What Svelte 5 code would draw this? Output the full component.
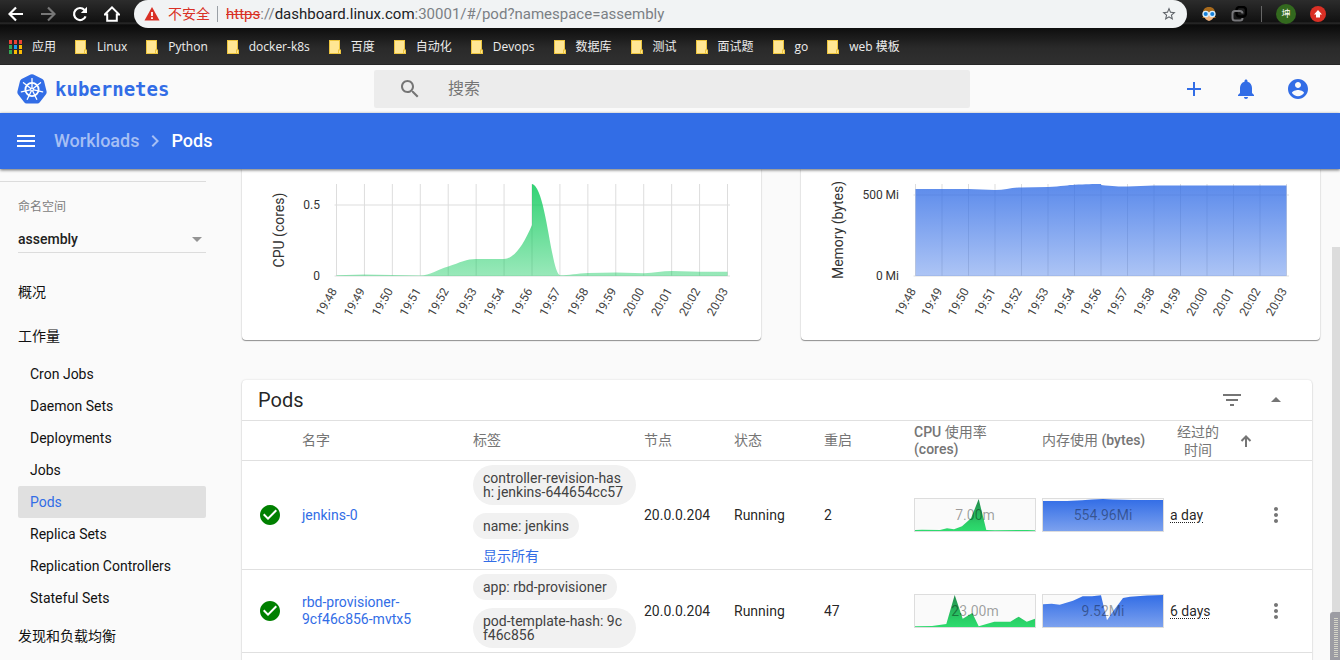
<script>
  const bookmarks = ['Linux', 'Python', 'docker-k8s', '百度', '自动化', 'Devops', '数据库', '测试', '面试题', 'go', 'web 模板'];

  const appColors = ['#ea4335', '#ea4335', '#ea4335', '#34a853', '#1a9bf0', '#fbbc05', '#34a853', '#fbbc05', '#fbbc05'];

  const workloads = [
    'Cron Jobs',
    'Daemon Sets',
    'Deployments',
    'Jobs',
    'Pods',
    'Replica Sets',
    'Replication Controllers',
    'Stateful Sets'
  ];

  const times = ['19:48', '19:49', '19:50', '19:51', '19:52', '19:53', '19:54', '19:56', '19:57', '19:58', '19:59', '20:00', '20:01', '20:02', '20:03'];

  const charts = [
    {
      id: 'cpu',
      label: 'CPU (cores)',
      color: '#00c752',
      left: 94.5,
      tickX: 78,
      ticks: [{ text: '0.5', y: 36 }, { text: '0', y: 107 }],
      area: 'M94.5 106.2L122 105.4L150 106L178.300 106.600C188 106.600 195 100.500 206.200 97.500C218 93.500 225 90 234 90L262 90C272 89.500 281 77 290 56L290 15C304 17 309 104 318 106.200C327 106.200 335 104.600 346 104L374 103.600L402 104.300C412 104 420 102 430 102L457.600 102.700L485.500 102.700V107H94.500Z'
    },
    {
      id: 'memory',
      label: 'Memory (bytes)',
      color: '#326de6',
      left: 114.5,
      tickX: 98,
      ticks: [{ text: '500 Mi', y: 26 }, { text: '0 Mi', y: 107 }],
      area: 'M114.500 20H167.500L194 21C204 21 211 18.500 220.500 18.400L247 18C260 17.500 268 16 273.500 15.800C285 15.200 292 15 300 15V16C312 17.400 318 17.500 326.500 17.500L353 16.500H485.500V107H114.500Z'
    }
  ];

  const pods = [
    {
      name: 'jenkins-0',
      labels: ['controller-revision-hash: jenkins-644654cc57', 'name: jenkins'],
      more: true,
      node: '20.0.0.204',
      status: 'Running',
      restarts: 2,
      cpu: '7.00m',
      cpuArea: '0,31 7,30.700 25,31 32,29.300 39,30.300 47,27.300 56,19.300 63.700,0 71.300,31 80,31.300 112,31 120,31.300',
      memory: '554.96Mi',
      memoryArea: '0,2 24,2 39,1.300 49,.5 60,0 70,.5 90,1 120,1',
      age: 'a day'
    },
    {
      name: 'rbd-provisioner-9cf46c856-mvtx5',
      labels: ['app: rbd-provisioner', 'pod-template-hash: 9cf46c856'],
      more: false,
      node: '20.0.0.204',
      status: 'Running',
      restarts: 47,
      cpu: '23.00m',
      cpuArea: '0,31.300 17,31 31.300,29 39.700,0 47.700,23.700 57.300,18 63.700,31.300 79.300,26.700 95.300,26.700 103.700,21.700 111.700,26.700 120,23.700',
      memory: '9.52Mi',
      memoryArea: '0,9.300 8.700,8.700 16.700,9.700 30,5.700 39.700,1.300 49,1.300 58,.3 64,25.300 70.300,16 80,3 87,1.700 104,.5 120,0',
      age: '6 days'
    }
  ];

  let namespace = 'assembly';
  let search = '';
</script>

<div class="window">
  <div class="browser">
    <div class="address-row">
      <button aria-label="Back">
        <svg width="16" height="16" viewBox="0 0 16 16"><path d="M15 8H2M8 1.500L1.500 8L8 14.500" fill="none" stroke="#fff" stroke-width="2.200" /></svg>
      </button>
      <button aria-label="Forward">
        <svg width="16" height="16" viewBox="0 0 16 16"><path d="M1 8H14M8 1.500L14.500 8L8 14.500" fill="none" stroke="#777" stroke-width="2.200" /></svg>
      </button>
      <button aria-label="Reload">
        <svg width="16" height="16" viewBox="0 0 16 16"><path d="M13.600 10.300A6 6 0 1 1 12.500 4" fill="none" stroke="#fff" stroke-width="2.200" /><path d="M15 .8V7H8.800Z" fill="#fff" /></svg>
      </button>
      <button aria-label="Home">
        <svg width="16" height="16" viewBox="0 0 16 16"><path d="M.8 8.500L8 1.400L15.200 8.500H12.800V14.800H3.200V8.500Z" fill="none" stroke="#fff" stroke-width="2" /></svg>
      </button>
      <div class="address">
        <svg width="16" height="14" viewBox="0 0 16 14"><path d="M8 0L15.500 13.500H.5Z" fill="#d93025" /><path d="M8 5V9M8 10.200V12" stroke="#fff" stroke-width="1.800" /></svg>
        <span class="insecure">不安全</span>
        <span class="url"><s>https</s>://<b>dashboard.linux.com</b>:30001/#/pod?namespace=assembly</span>
        <svg class="star" width="16" height="16" viewBox="0 0 24 24"><path fill="#5f6368" d="M22 9.240l-7.190-.62L12 2 9.190 8.630 2 9.240l5.460 4.730L5.820 21 12 17.270 18.180 21l-1.630-7.030L22 9.240zM12 15.400l-3.760 2.270 1-4.280-3.320-2.880 4.380-.38L12 6.100l1.710 4.040 4.380.38-3.320 2.880 1 4.280L12 15.400z" /></svg>
      </div>
      <div class="extensions">
        <svg width="16" height="16" viewBox="0 0 16 16">
          <path d="M2 11C1 3 4 1 8 1S15 3 14 11L15 12H1Z" fill="#a86a1c" />
          <path d="M3 6H13V10Q12 14 8 15Q4 14 3 10Z" fill="#efb27c" />
          <circle cx="4.700" cy="8" r="2.700" fill="#1680d8" stroke="#d9efff" stroke-width="1.300" />
          <circle cx="11.300" cy="8" r="2.700" fill="#1680d8" stroke="#d9efff" stroke-width="1.300" />
        </svg>
        <svg width="16" height="16" viewBox="0 0 16 16">
          <rect x="5.500" y="1" width="9.500" height="9.500" rx="3" fill="none" stroke="#000" stroke-width="2.400" />
          <path d="M11.500 7.500Q11.500 5 9 5H4Q1.500 5 1.500 7.500V12Q1.500 14.500 4 14.500H9Q11.500 14.500 11.500 12" fill="none" stroke="#77777a" stroke-width="2" />
        </svg>
        <span class="divider"></span>
        <span class="profile">坤</span>
        <svg class="update" width="16" height="16" viewBox="0 0 16 16"><circle cx="8" cy="8" r="8" fill="#d93025" /><path d="M8 4L12 8.500H10V11.500H6V8.500H4Z" fill="#fff" /></svg>
      </div>
    </div>
    <nav class="bookmarks" aria-label="Bookmarks">
      <a href="#apps">
        <svg width="13" height="14" viewBox="0 0 13 14">
          {#each appColors as color, i}
            <rect x={(i % 3) * 5} y={Math.floor(i / 3) * 5} width="3" height="4" fill={color} />
          {/each}
        </svg>
        应用
      </a>
      {#each bookmarks as bookmark}
        <a href="#bookmark">
          <svg width="12" height="14" viewBox="0 0 12 14"><path d="M0 0H11V9.500H12V14H0Z" fill="#edc53f" /><path d="M1 1H10V9.500H9V13H1Z" fill="#ffe694" /><path d="M10 10.500H11V13H10Z" fill="#ffe694" /></svg>
          {bookmark}
        </a>
      {/each}
    </nav>
  </div>

  <header class="header">
    <a class="logo" href="#/">
      <svg width="30" height="30" viewBox="0 0 30 30">
        <path d="M13.600 .6Q15 0 16.400 .6L25.400 4.900Q26.700 5.600 27 7L29.600 17.500Q29.900 19 29 20.200L22.800 28.200Q21.900 29.400 20.400 29.400H9.600Q8.100 29.400 7.200 28.200L1 20.200Q.1 19 .4 17.500L3 7Q3.300 5.600 4.600 4.900Z" fill="#326de6" />
        <g fill="none" stroke="#fff">
          <circle cx="15" cy="15.500" r="6.600" stroke-width="1.900" />
          {#each [0, 1, 2, 3, 4, 5, 6] as spoke}
            <path d="M15 13.600V4.600" stroke-width="1.300" stroke-linecap="round" transform="rotate({(spoke * 360) / 7} 15 15.500)" />
          {/each}
        </g>
        <circle cx="15" cy="15.500" r="2" fill="#fff" />
        <circle cx="15" cy="15.500" r=".8" fill="#326de6" />
      </svg>
      kubernetes
    </a>
    <label class="search">
      <svg width="24" height="24" viewBox="0 0 24 24"><path fill="#757575" d="M15.500 14h-.79l-.28-.27C15.410 12.590 16 11.110 16 9.500 16 5.910 13.090 3 9.500 3S3 5.910 3 9.500 5.910 16 9.500 16c1.610 0 3.090-.59 4.230-1.570l.27.28v.79l5 4.990L20.490 19l-4.990-5zm-6 0C7.010 14 5 11.990 5 9.500S7.010 5 9.500 5 14 7.010 14 9.500 11.990 14 9.500 14z" /></svg>
      <input type="text" placeholder="搜索" aria-label="搜索" bind:value={search} />
    </label>
    <div class="actions">
      <button aria-label="Create">
        <svg width="24" height="24" viewBox="0 0 24 24"><path d="M19 13h-6v6h-2v-6H5v-2h6V5h2v6h6v2z" /></svg>
      </button>
      <button aria-label="Notifications">
        <svg width="24" height="24" viewBox="0 0 24 24"><path d="M12 22c1.100 0 2-.9 2-2h-4c0 1.100.89 2 2 2zm6-6v-5c0-3.070-1.640-5.640-4.500-6.320V4c0-.83-.67-1.500-1.500-1.500s-1.500.67-1.500 1.500v.68C7.630 5.360 6 7.920 6 11v5l-2 2v1h16v-1l-2-2z" /></svg>
      </button>
      <button aria-label="Account">
        <svg width="24" height="24" viewBox="0 0 24 24"><path d="M12 2C6.480 2 2 6.480 2 12s4.480 10 10 10 10-4.480 10-10S17.520 2 12 2zm0 3c1.660 0 3 1.340 3 3s-1.340 3-3 3-3-1.340-3-3 1.340-3 3-3zm0 14.200c-2.500 0-4.710-1.280-6-3.220.03-1.990 4-3.080 6-3.080 1.990 0 5.970 1.090 6 3.080-1.290 1.940-3.500 3.220-6 3.220z" /></svg>
      </button>
    </div>
  </header>

  <div class="toolbar">
    <button aria-label="Menu">
      <svg width="24" height="24" viewBox="0 0 24 24"><path fill="#fff" d="M3 18h18v-2H3v2zm0-5h18v-2H3v2zm0-7v2h18V6H3z" /></svg>
    </button>
    <a class="crumb" href="#/workloads">Workloads</a>
    <svg class="chevron" width="24" height="24" viewBox="0 0 24 24"><path d="M10 6L8.590 7.410 13.170 12l-4.580 4.590L10 18l6-6z" /></svg>
    <span>Pods</span>
  </div>

  <div class="body">
    <aside class="sidebar">
      <div class="namespace">
        <label for="namespace">命名空间</label>
        <div class="select">
          <select id="namespace" bind:value={namespace}>
            <option>assembly</option>
          </select>
          <svg width="10" height="5" viewBox="0 0 10 5"><path d="M0 0H10L5 5Z" fill="#949494" /></svg>
        </div>
      </div>
      <nav>
        <a class="group" href="#/overview">概况</a>
        <a class="group" href="#/workloads">工作量</a>
        {#each workloads as item}
          <a class="item" class:active={item === 'Pods'} href="#/item">{item}</a>
        {/each}
        <a class="group" href="#/discovery">发现和负载均衡</a>
      </nav>
    </aside>

    <main>
      <div class="charts">
        {#each charts as chart}
          <section class="card chart">
            <svg viewBox="0 0 519 171">
              <defs>
                <linearGradient id="{chart.id}-area" x1="0" y1="0" x2="0" y2="1">
                  <stop offset="0" stop-color={chart.color} stop-opacity=".8" />
                  <stop offset="1" stop-color={chart.color} stop-opacity=".4" />
                </linearGradient>
              </defs>
              {#each times as time, i}
                {@const x = chart.left + (i * (485.5 - chart.left)) / 14}
                <path class="grid" d="M{x} 15V107" />
                <text class="time" text-anchor="end" transform="translate({x + 1} 122) rotate(-60)">{time}</text>
              {/each}
              {#each chart.ticks as tick}
                <path class="grid" d="M{chart.left - 2} {tick.y}H488" />
                <text class="tick" x={chart.tickX} y={tick.y + 4} text-anchor="end">{tick.text}</text>
              {/each}
              <path d={chart.area} fill="url(#{chart.id}-area)" />
              <text class="axis" text-anchor="middle" transform="translate(42 61) rotate(-90)">{chart.label}</text>
            </svg>
          </section>
        {/each}
      </div>

      <section class="card pods">
        <div class="card-header">
          <h2>Pods</h2>
          <button aria-label="Filter">
            <svg width="24" height="24" viewBox="0 0 24 24"><path d="M10 18h4v-2h-4v2zM3 6v2h18V6H3zm3 7h12v-2H6v2z" /></svg>
          </button>
          <button aria-label="Collapse">
            <svg width="24" height="24" viewBox="0 0 24 24"><path d="M7 14l5-5 5 5z" /></svg>
          </button>
        </div>
        <table>
          <colgroup>
            <col class="col-icon" />
            <col />
            <col class="col-labels" />
            <col class="col-short" />
            <col class="col-short" />
            <col class="col-short" />
            <col class="col-metric" />
            <col class="col-metric" />
            <col class="col-age" />
            <col class="col-menu" />
          </colgroup>
          <thead>
            <tr>
              <th></th>
              <th>名字</th>
              <th>标签</th>
              <th>节点</th>
              <th>状态</th>
              <th>重启</th>
              <th><b>CPU</b> 使用率<br /><b>(cores)</b></th>
              <th>内存使用 <b>(bytes)</b></th>
              <th>
                <button class="sort">
                  <span>经过的时间</span>
                  <svg width="12" height="12" viewBox="0 0 12 12"><path d="M6 12V2M1.500 6L6 1.500L10.500 6" fill="none" stroke="#757575" stroke-width="2" /></svg>
                </button>
              </th>
              <th></th>
            </tr>
          </thead>
          <tbody>
            {#each pods as pod}
              <tr>
                <td class="status">
                  <svg width="24" height="24" viewBox="0 0 24 24"><path fill="#008000" d="M12 2C6.480 2 2 6.480 2 12s4.480 10 10 10 10-4.480 10-10S17.520 2 12 2zm-2 15l-5-5 1.410-1.410L10 14.170l7.590-7.590L19 8l-9 9z" /></svg>
                </td>
                <td class="name"><a href="#/pod">{pod.name}</a></td>
                <td>
                  <div class="chips">
                    {#each pod.labels as label}
                      <span class="chip">{label}</span>
                    {/each}
                    {#if pod.more}
                      <a href="#/labels">显示所有</a>
                    {/if}
                  </div>
                </td>
                <td>{pod.node}</td>
                <td>{pod.status}</td>
                <td>{pod.restarts}</td>
                <td>
                  <div class="spark">
                    <svg viewBox="0 0 120 32" preserveAspectRatio="none">
                      <defs>
                        <linearGradient id="spark-cpu" x1="0" y1="0" x2="0" y2="1">
                          <stop offset="0" stop-color="#228a4c" />
                          <stop offset=".8" stop-color="#2bd168" />
                          <stop offset="1" stop-color="#2edb6e" />
                        </linearGradient>
                      </defs>
                      <polygon points="{pod.cpuArea} 120,32 0,32" fill="url(#spark-cpu)" />
                    </svg>
                    <span>{pod.cpu}</span>
                  </div>
                </td>
                <td>
                  <div class="spark">
                    <svg viewBox="0 0 120 32" preserveAspectRatio="none">
                      <defs>
                        <linearGradient id="spark-memory" x1="0" y1="0" x2="0" y2="1">
                          <stop offset="0" stop-color="#326de6" />
                          <stop offset="1" stop-color="#7ca1ee" />
                        </linearGradient>
                      </defs>
                      <polygon points="{pod.memoryArea} 120,32 0,32" fill="url(#spark-memory)" />
                    </svg>
                    <span>{pod.memory}</span>
                  </div>
                </td>
                <td><span class="age">{pod.age}</span></td>
                <td>
                  <button class="menu" aria-label="Actions">
                    <svg width="24" height="24" viewBox="0 0 24 24"><path d="M12 8c1.100 0 2-.9 2-2s-.9-2-2-2-2 .9-2 2 .9 2 2 2zm0 2c-1.100 0-2 .9-2 2s.9 2 2 2 2-.9 2-2-.9-2-2-2zm0 6c-1.100 0-2 .9-2 2s.9 2 2 2 2-.9 2-2-.9-2-2-2z" /></svg>
                  </button>
                </td>
              </tr>
            {/each}
          </tbody>
        </table>
        <div class="next-row"></div>
      </section>
    </main>
    <div class="scrollbar"></div>
    <div class="gadget"></div>
  </div>
</div>

<style>
  :global(body) {
    background: #fafafa;
  }

  .window {
    display: flex;
    flex-direction: column;
    height: 100vh;
    overflow: hidden;
    font: 14px/20px Roboto, "Noto Sans CJK SC", sans-serif;
    color: rgba(0, 0, 0, 0.87);
  }

  a {
    color: inherit;
    text-decoration: none;
  }

  button {
    display: flex;
    align-items: center;
    justify-content: center;
    padding: 0;
    border: none;
    background: none;
    font: inherit;
    color: inherit;
    cursor: pointer;
  }

  svg {
    display: block;
    flex: none;
  }

  .browser {
    flex: none;
    background: linear-gradient(#2c2c2c 0, #111 22px, #2d2d2d 23px, #0b0b0b 25px, #111 30px, #2a2a2a 48px, #303030 64px, #1c1c1c 65px);
    font-family: "Open Sans", "Noto Sans CJK SC", sans-serif;
  }

  .address-row {
    display: flex;
    align-items: center;
    gap: 16px;
    height: 28px;
    padding-left: 8px;
  }

  .address {
    flex: 1;
    display: flex;
    align-items: center;
    height: 28px;
    margin: 0 -2px;
    padding: 0 10px;
    border-radius: 14px;
    background: #f1f3f4;
  }

  .insecure {
    margin: 0 8px;
    padding-right: 7px;
    border-right: 1px solid #9aa0a6;
    font-size: 14px;
    line-height: 16px;
    color: #d93025;
  }

  .url {
    flex: 1;
    font-family: Roboto, sans-serif;
    font-size: 15px;
    color: #7b7f84;
  }

  .url s {
    color: #d93025;
  }

  .url b {
    font-weight: 400;
    color: #202124;
  }

  .extensions {
    display: flex;
    align-items: center;
    gap: 14px;
    margin-right: 14px;
  }

  .divider {
    width: 1px;
    height: 16px;
    background: #666;
  }

  .profile {
    width: 20px;
    border-radius: 50%;
    background: #33691e;
    font-size: 9px;
    text-align: center;
    color: #fff;
  }

  .bookmarks {
    display: flex;
    gap: 19px;
    align-items: center;
    height: 37px;
    padding-left: 9px;
    font-size: 12px;
    color: #eee;
  }

  .bookmarks a {
    display: flex;
    align-items: center;
    gap: 10px;
    white-space: nowrap;
  }

  .header {
    flex: none;
    display: grid;
    grid-template-columns: 374px 1fr 370px;
    align-items: center;
    height: 48px;
  }

  .logo {
    display: flex;
    align-items: center;
    gap: 8px;
    padding-left: 17px;
    font: bold 19px/30px "DejaVu Sans Mono", monospace;
    color: #326de6;
  }

  .search {
    display: flex;
    align-items: center;
    gap: 26px;
    height: 38px;
    padding-left: 24px;
    border-radius: 2px;
    background: #ececec;
  }

  .search input {
    flex: 1;
    padding: 0;
    border: none;
    outline: none;
    background: none;
    font: 16px/24px Roboto, "Noto Sans CJK SC", sans-serif;
  }

  .search input::placeholder {
    color: #757575;
  }

  .actions {
    display: flex;
    justify-content: flex-end;
    gap: 28px;
    padding-right: 30px;
    fill: #326de6;
  }

  .toolbar {
    flex: none;
    display: flex;
    align-items: center;
    height: 56px;
    padding-left: 14px;
    background: #326de6;
    box-shadow: 0 1px 3px rgba(0, 0, 0, 0.6);
    font-size: 18px;
    font-weight: 500;
    color: #fff;
    z-index: 1;
  }

  .crumb {
    margin-left: 16px;
    color: #a6bff4;
  }

  .chevron {
    margin: 0 4px;
    fill: #a6bff4;
  }

  .body {
    position: relative;
    flex: 1;
    display: flex;
    min-height: 0;
    overflow: hidden;
    background: #fafafa;
  }

  .sidebar {
    flex: none;
    width: 206px;
    margin-top: 12px;
    border-top: 1px solid #dcdcdc;
  }

  .namespace {
    margin: 15px 0 17px 18px;
    border-bottom: 1px solid #dcdcdc;
  }

  .namespace label {
    display: block;
    font-size: 12px;
    color: #7d7d7d;
  }

  .select {
    display: flex;
    align-items: center;
    padding: 10px 4px 1px 0;
  }

  select {
    flex: 1;
    appearance: none;
    height: 24px;
    padding: 0;
    border: none;
    background: none;
    font: 500 14px/24px Roboto, sans-serif;
    color: #212121;
  }

  .sidebar nav {
    padding-left: 18px;
    color: #111;
  }

  .sidebar nav a {
    display: block;
  }

  .group {
    line-height: 44px;
  }

  .item {
    padding-left: 12px;
    border-radius: 2px;
    line-height: 32px;
  }

  .sidebar nav .active {
    background: #e0e0e0;
    color: #326de6;
  }

  main {
    flex: 1;
    min-width: 0;
    padding: 0 20px 0 36px;
  }

  .card {
    border-radius: 4px;
    background: #fff;
    box-shadow: 0 1px 1px rgba(0, 0, 0, 0.4), 0 0 2px rgba(0, 0, 0, 0.15);
  }

  .charts {
    display: grid;
    grid-template-columns: 1fr 1fr;
    gap: 40px;
    margin-right: -8px;
  }

  .chart {
    border-radius: 0 0 4px 4px;
  }

  .chart svg {
    width: 100%;
    fill: #333;
  }

  .grid {
    stroke: #ddd;
    stroke-width: 1;
  }

  .time {
    font-size: 12px;
    fill: #444;
  }

  .tick {
    font-size: 12px;
  }

  .axis {
    font-size: 14px;
  }

  .pods {
    margin-top: 40px;
  }

  .card-header {
    display: flex;
    align-items: center;
    gap: 20px;
    height: 40px;
    padding: 0 24px 0 16px;
    border-bottom: 1px solid #e0e0e0;
    fill: #757575;
  }

  h2 {
    flex: 1;
    margin: 0;
    font-size: 20px;
    font-weight: 400;
  }

  table {
    width: 100%;
    table-layout: fixed;
    border-collapse: separate;
    border-spacing: 0;
  }

  .col-icon {
    width: 60px;
  }

  .col-labels {
    width: 171px;
  }

  .col-short {
    width: 90px;
  }

  .col-metric {
    width: 128px;
  }

  .col-age {
    width: 86px;
  }

  .col-menu {
    width: 56px;
  }

  th,
  td {
    padding: 0;
    border-bottom: 1px solid #e0e0e0;
    text-align: left;
  }

  th {
    height: 39px;
    font-weight: 400;
    line-height: 17px;
    color: #757575;
    white-space: nowrap;
  }

  th b {
    font-weight: 500;
  }

  .sort {
    gap: 20px;
    padding-left: 6px;
    line-height: 18px;
  }

  .sort span {
    width: 44px;
    white-space: normal;
  }

  .status {
    padding-left: 16px;
  }

  .name {
    padding-right: 40px;
    line-height: 17px;
  }

  td a {
    color: #326de6;
  }

  .chips {
    display: flex;
    flex-direction: column;
    align-items: flex-start;
    gap: 8px;
    padding: 4px 8px 4px 0;
  }

  .chip {
    padding: 6px 10px;
    border-radius: 20px;
    background: #f1f1f1;
    line-height: 14px;
    color: #424242;
    word-break: break-all;
  }

  .chips a {
    margin-left: 10px;
    line-height: 18px;
  }

  .spark {
    position: relative;
    width: 120px;
    height: 32px;
    border: 1px solid #ddd;
    background: #fafafa;
  }

  .spark svg {
    width: 100%;
    height: 100%;
  }

  .spark span {
    position: absolute;
    inset: 0;
    line-height: 32px;
    text-align: center;
    color: rgba(0, 0, 0, 0.38);
  }

  .age {
    text-decoration: underline dotted 1px;
    text-underline-offset: 2px;
  }

  .menu {
    margin-left: 8px;
    fill: #757575;
  }

  .next-row {
    height: 83px;
  }

  .scrollbar {
    flex: none;
    width: 8px;
    margin-top: 78px;
    background: #dcdcdc;
  }

  .gadget {
    position: absolute;
    right: 0;
    bottom: 0;
    width: 10px;
    height: 48px;
    border-radius: 3px 0 0 0;
    background: repeating-linear-gradient(#d5d5c8 0 1px, #9a9aa2 1px 2px) 4px 6px / 4px 40px no-repeat, #9c9ca3;
  }
</style>
